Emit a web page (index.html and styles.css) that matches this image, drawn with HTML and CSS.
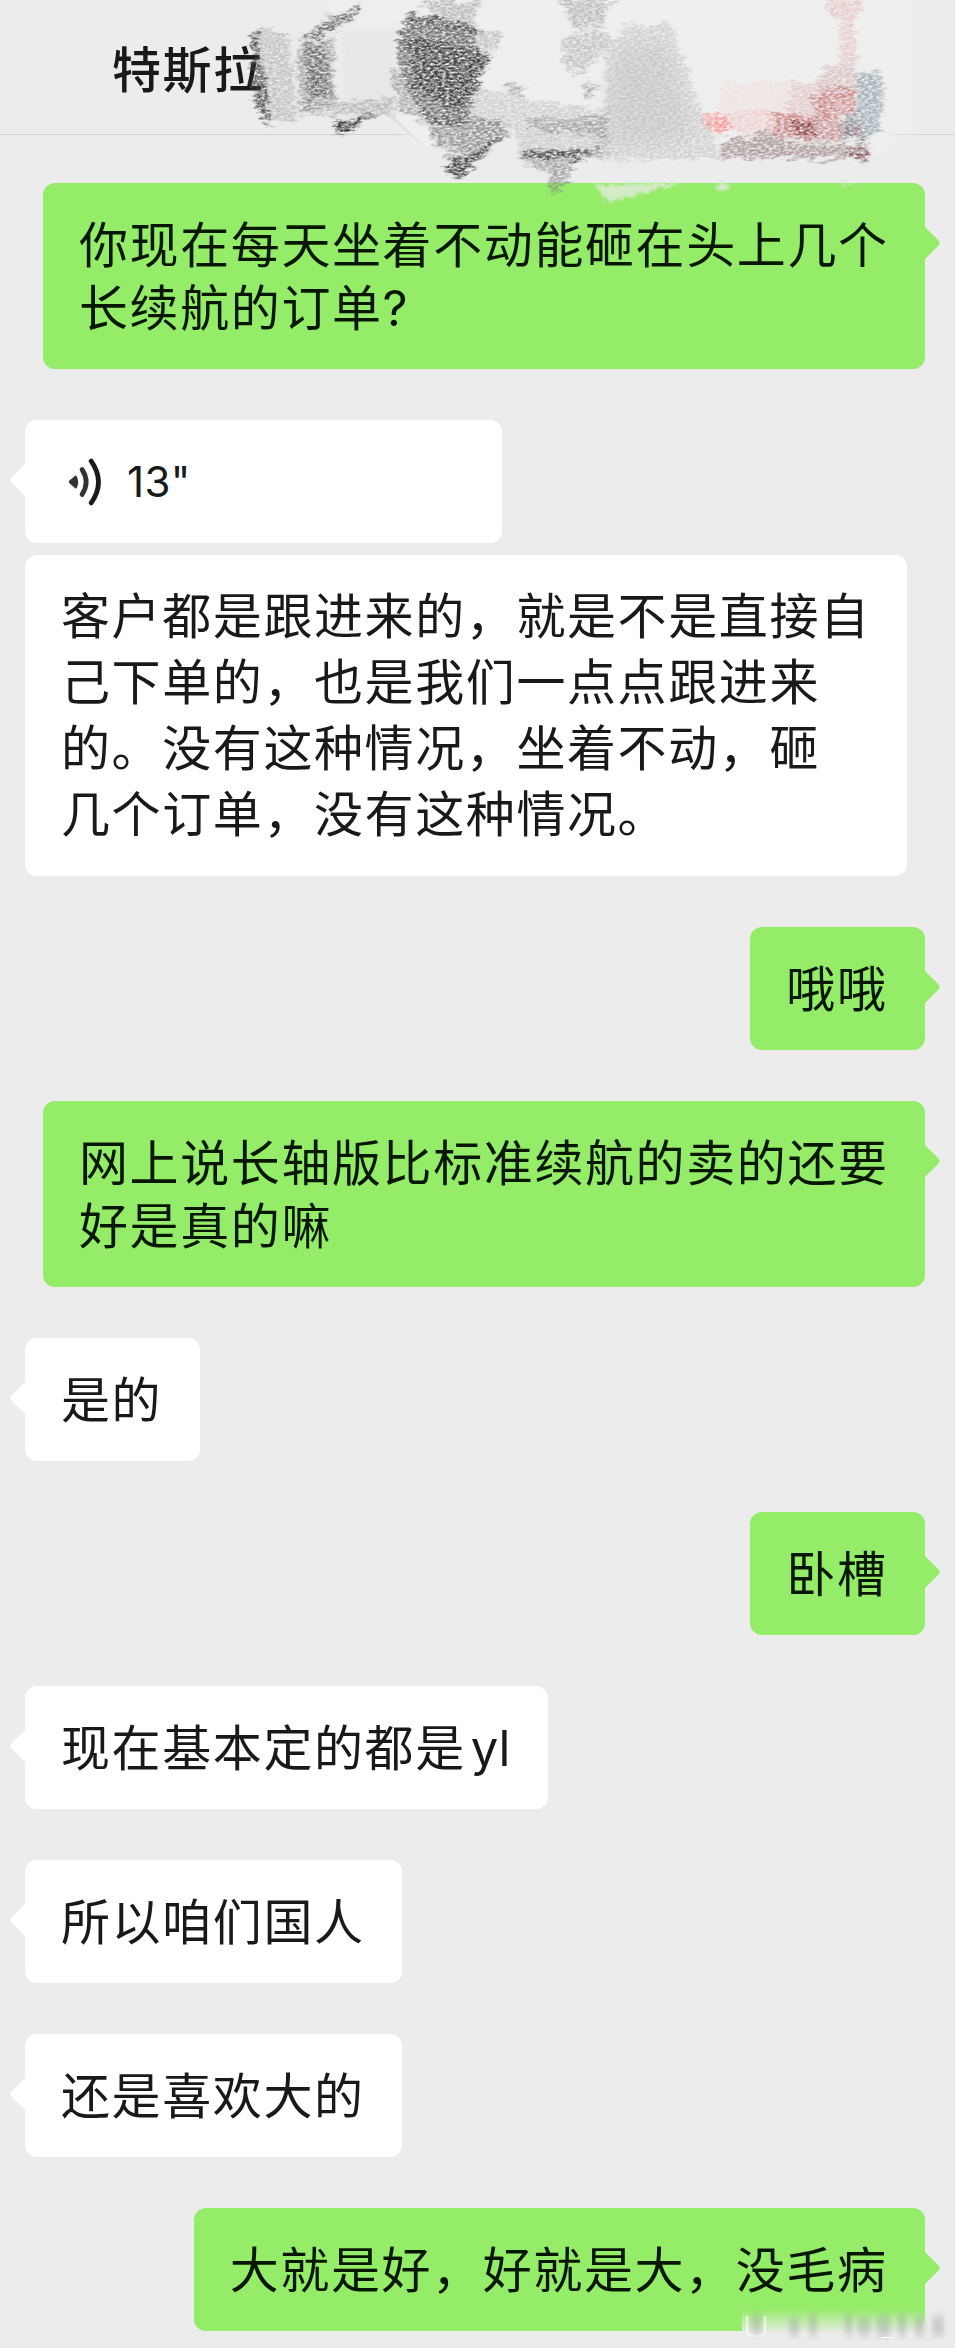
FILE: index.html
```html
<!DOCTYPE html>
<html lang="zh-CN">
<head>
<meta charset="utf-8">
<title>特斯拉</title>
<link rel="stylesheet" href="styles.css">
</head>
<body>
<div class="screen">
  <header class="header">
    <h1 class="title">特斯拉</h1>
    <svg class="scribble" width="955" height="215" viewBox="0 0 955 215" aria-hidden="true">
      <defs>
        <filter id="chalk" x="0" y="0" width="955" height="215" filterUnits="userSpaceOnUse" color-interpolation-filters="sRGB">
          <feGaussianBlur in="SourceGraphic" stdDeviation="1.6" result="soft"/>
          <feTurbulence type="fractalNoise" baseFrequency="0.07 0.2" numOctaves="4" seed="4" result="warp"/>
          <feDisplacementMap in="soft" in2="warp" scale="17" xChannelSelector="R" yChannelSelector="G" result="rough"/>
          <feTurbulence type="fractalNoise" baseFrequency="0.26 0.5" numOctaves="5" seed="9"/>
          <feColorMatrix type="matrix" values="0 0 0 0 0  0 0 0 0 0  0 0 0 0 0  1.7 1.5 0 0 -0.95" result="grain"/>
          <feComposite in="rough" in2="grain" operator="in"/>
          <feGaussianBlur stdDeviation="0.45"/>
        </filter>
        <filter id="veil" x="0" y="0" width="955" height="215" filterUnits="userSpaceOnUse" color-interpolation-filters="sRGB">
          <feTurbulence type="fractalNoise" baseFrequency="0.2" numOctaves="2" seed="2" result="n"/>
          <feDisplacementMap in="SourceGraphic" in2="n" scale="9" xChannelSelector="R" yChannelSelector="G"/>
          <feGaussianBlur stdDeviation="0.9"/>
        </filter>
        <filter id="soft4" x="-30%" y="-30%" width="160%" height="160%"><feGaussianBlur stdDeviation="4"/></filter>
        <filter id="soft10" x="-40%" y="-40%" width="180%" height="180%"><feGaussianBlur stdDeviation="9"/></filter>
      </defs>
      <!-- pale strokes that hide the divider -->
      <path d="M345 110 L375 112 L425 146 L560 132 L560 160 L880 158 L900 128 L912 141 L912 0 L330 0Z" fill="#eeefee" filter="url(#soft4)"/>
      <path d="M340 30 L402 26 L396 108 L345 112Z" fill="#dfdfdf" opacity=".4" filter="url(#soft4)"/>
      <path d="M384 114 L392 114 L425 148 Z" fill="#dadada" opacity=".6"/>
      <path d="M596 185 L682 183 L640 194 L607 203Z" fill="#d3ebc6" filter="url(#veil)"/>
      <path d="M716 184h14l-2 7h-10zM838 183h16l-3 2z" fill="#d3ebc6" filter="url(#veil)"/>
      <path d="M620 45 L665 45 L685 110 L690 140 L610 145 L605 90Z" fill="#c4c4c4" opacity=".32" filter="url(#soft10)"/>
      <!-- crayon texture -->
      <g filter="url(#chalk)">
        <path d="M250 32 L257 31 L263 70 L271 122 L265 122 L255 104Z" fill="#444" opacity=".85"/>
        <path d="M257 28 L288 32 L297 124 L266 120Z" fill="#777" opacity=".34"/>
        <path d="M296 48 L335 36 L334 105 L300 114 L298 80Z" fill="#555" opacity=".4"/>
        <path d="M304 46 L325 42 L332 96 L308 100Z" fill="#333" opacity=".5"/>
        <path d="M296 40 L358 6 L361 13 L318 38Z" fill="#444" opacity=".75"/>
        <path d="M325 10 L335 18 L342 28 L331 20Z" fill="#888" opacity=".7"/>
        <path d="M300 106 L395 96 L395 115 L335 114 L300 116Z" fill="#777" opacity=".4"/>
        <path d="M333 116 L342 123 L378 112 L338 137Z" fill="#333"/>
        <path d="M420 0 L478 0 L470 28 L445 22Z" fill="#777" opacity=".42"/>
        <path d="M392 70 L410 75 L440 128 L400 112Z" fill="#888" opacity=".65"/>
        <path d="M410 12 L480 28 L475 45 L490 58 L480 82 L464 126 L428 125 L410 92 L398 65 L396 40Z" fill="#666" opacity=".9"/>
        <path d="M410 13 L480 28 L478 36 L408 22Z" fill="#444" opacity=".55"/>
        <path d="M412 36 L490 54 L478 80 L464 112 L412 88Z" fill="#3c3c3c" opacity=".8"/>
        <path d="M479 30 L504 34 L494 50 L478 50Z" fill="#999" opacity=".5"/>
        <path d="M428 118 L500 118 L510 130 L470 155 L450 149 L434 146Z" fill="#555" opacity=".55"/>
        <path d="M446 154 L466 157 L513 130 L480 158 L457 179 L446 173Z" fill="#3a3a3a" opacity=".9"/>
        <path d="M468 84 L520 98 L610 110 L608 158 L520 157 L515 130 L465 132Z" fill="#777" opacity=".24"/>
        <path d="M525 118 L606 118 L604 136 L530 130Z" fill="#555" opacity=".34"/>
        <path d="M522 151 L598 149 L596 158 L523 158Z" fill="#222" opacity=".7"/>
        <path d="M560 0 L615 0 L600 25 L575 32Z" fill="#777" opacity=".4"/>
        <path d="M563 38 L600 30 L614 40 L585 72 L563 72Z" fill="#777" opacity=".34"/>
        <path d="M506 84 L526 84 L520 96 L508 94ZM582 82 L602 88 L586 100Z" fill="#555" opacity=".4"/>
        <path d="M625 25 L672 25 L690 80 L722 158 L580 160 L606 118 L604 55Z" fill="#999" opacity=".33"/>
        <path d="M520 160 L578 158 L562 192 L550 193 L548 173Z" fill="#888" opacity=".7"/>
        <path d="M704 114 L728 114 L730 132 L704 130Z" fill="#ff6f6f" opacity=".6"/>
        <path d="M720 114 L790 110 L820 118 L790 132 L720 132Z" fill="#ff7f7f" opacity=".26"/>
        <path d="M720 82 L820 82 L820 120 L720 112Z" fill="#ffaaa8" opacity=".15"/>
        <path d="M825 0 L862 0 L858 15 L852 22 L858 62 L838 66 L842 20 L824 12Z" fill="#dc7777" opacity=".28"/>
        <path d="M822 67 L856 64 L856 100 L820 94Z" fill="#b86b6e" opacity=".3"/>
        <path d="M790 84 L830 80 L830 118 L785 116Z" fill="#b86b6e" opacity=".2"/>
        <path d="M812 96 L852 86 L858 112 L818 121Z" fill="#b7353c" opacity=".45"/>
        <path d="M770 112 L820 117 L860 122 L864 137 L820 142 L775 138Z" fill="#a73c43" opacity=".45"/>
        <path d="M786 122 L812 122 L820 138 L798 135Z" fill="#751b22" opacity=".65"/>
        <path d="M856 74 L878 72 L885 90 L880 130 L866 139 L840 139 L846 114 L858 108Z" fill="#506a79" opacity=".45"/>
        <path d="M722 144 L772 130 L785 144 L868 144 L870 159 L722 158Z" fill="#714d51" opacity=".5"/>
        <path d="M845 151 L871 149 L869 159 L845 159Z" fill="#783639" opacity=".6"/>
      </g>
    </svg>
  </header>

  <main class="chat">
    <div class="row sent"><div class="bubble wide">你现在每天坐着不动能砸在头上几个<br>长续航的订单<span class="latin">?</span></div></div>
    <div class="row received voice-row">
      <div class="bubble voice">
        <svg class="voice-icon" width="36" height="50" viewBox="0 0 36 50" aria-hidden="true">
          <path d="M2.4 23.6 L8.2 18.7 Q9.3 18.3 9.8 19.5 Q12.6 25 9.8 30.7 Q9.2 31.8 8.2 31.2 L2.4 26.2 Q1 24.9 2.4 23.6Z" fill="#333"/>
          <path d="M15.1 12.6 Q23.2 25 15.1 37.4" fill="none" stroke="#333" stroke-width="4.8" stroke-linecap="round"/>
          <path d="M24.2 4.1 Q38.8 25 24.2 45.9" fill="none" stroke="#1a1a1a" stroke-width="4.8" stroke-linecap="round"/>
        </svg>
        <span class="duration">13"</span>
      </div>
    </div>
    <div class="row received"><div class="bubble transcript">客户都是跟进来的，就是不是直接自<br>己下单的，也是我们一点点跟进来<br>的。没有这种情况，坐着不动，砸<br>几个订单，没有这种情况。</div></div>
    <div class="row sent"><div class="bubble">哦哦</div></div>
    <div class="row sent"><div class="bubble wide">网上说长轴版比标准续航的卖的还要<br>好是真的嘛</div></div>
    <div class="row received"><div class="bubble">是的</div></div>
    <div class="row sent"><div class="bubble">卧槽</div></div>
    <div class="row received"><div class="bubble">现在基本定的都是<span class="latin model">yl</span></div></div>
    <div class="row received"><div class="bubble">所以咱们国人</div></div>
    <div class="row received"><div class="bubble">还是喜欢大的</div></div>
    <div class="row sent"><div class="bubble">大就是好，好就是大，没毛病</div></div>
  </main>

  <svg class="smudge" width="225" height="48" viewBox="0 0 225 48" aria-hidden="true">
    <defs>
      <linearGradient id="fade" x1="0" y1="0" x2="0" y2="1">
        <stop offset="0" stop-color="#e9ebe8" stop-opacity="0"/>
        <stop offset="1" stop-color="#e9ebe8"/>
      </linearGradient>
      <filter id="blur2"><feGaussianBlur stdDeviation="2.5 4"/></filter>
      <filter id="blur1"><feGaussianBlur stdDeviation=".7"/></filter>
    </defs>
    <rect x="12" y="9" width="186" height="24" fill="url(#fade)"/>
    <path d="M17 16 V33 Q26 40 35 33 V16" fill="none" stroke="#fff" stroke-width="2.5" opacity=".6" filter="url(#blur1)"/>
    <g fill="#909690" opacity=".36" filter="url(#blur2)">
      <path d="M22 13h9v22h-9zM59 18h10v18h-10zM79 14h8v22h-8zM115 14h7v22h-7zM128 18h12v18h-12zM147 15h13v22h-13zM168 14h8v22h-8zM185 16h9v20h-9zM202 16h12v20h-12z"/>
    </g>
    <path d="M151 37h12v1h-12z" fill="#fff"/>
  </svg>
</div>
</body>
</html>
```
FILE: styles.css
```css
* {
  box-sizing: border-box;
}

body {
  margin: 0;
  background: #ececec;
  color: #191919;
  font-family: "Noto Sans CJK SC", sans-serif;
}

.screen {
  position: relative;
  width: 955px;
  height: 2348px;
  overflow: hidden;
}

.header {
  position: relative;
  display: flex;
  align-items: center;
  height: 135px;
  padding: 0 0 0 112px;
  border-bottom: 1px solid #d2d2d2;
}

.title {
  margin: 0;
  font-size: 49px;
  font-weight: 500;
  line-height: 66px;
  letter-spacing: 1.6px;
}

.scribble {
  position: absolute;
  top: 0;
  left: 0;
  z-index: 2;
}

.chat {
  display: flex;
  flex-direction: column;
  gap: 51px;
  padding: 48px 30px 17px 25px;
}

.row {
  display: flex;
}

.sent {
  justify-content: flex-end;
}

.voice-row {
  margin-bottom: -39px;
}

.bubble {
  position: relative;
  min-height: 123px;
  padding: 27px 37.5px 33px 36px;
  border-radius: 12px;
  background: #fff;
  font-size: 49px;
  line-height: 63px;
  letter-spacing: 1.6px;
  white-space: nowrap;
}

.sent .bubble {
  background: #95ec69;
  color: #081800;
}

.sent .wide {
  width: 882px;
}

.bubble::before {
  content: "";
  position: absolute;
  top: 43px;
  left: -15px;
  width: 16px;
  height: 34px;
  background: #fff;
  clip-path: path("M16 0 L2 14 Q-1 17 2 20 L16 34Z");
}

.sent .bubble::before {
  left: auto;
  right: -15px;
  background: #95ec69;
  transform: scaleX(-1);
}

.bubble.voice {
  display: flex;
  align-items: center;
  gap: 24px;
  width: 477px;
  padding: 0 0 0 42px;
}

.duration {
  font-family: Inter, sans-serif;
  font-size: 42px;
  letter-spacing: 0.4px;
}

.bubble.transcript {
  width: 882px;
  height: 321px;
  padding-top: 25px;
  line-height: 66px;
}

.bubble.transcript::before {
  display: none;
}

.latin {
  font-family: Inter, sans-serif;
  line-height: 1;
}

.model {
  margin-left: 5px;
  letter-spacing: 0;
}

.smudge {
  position: absolute;
  right: 0;
  bottom: 0;
}
```
